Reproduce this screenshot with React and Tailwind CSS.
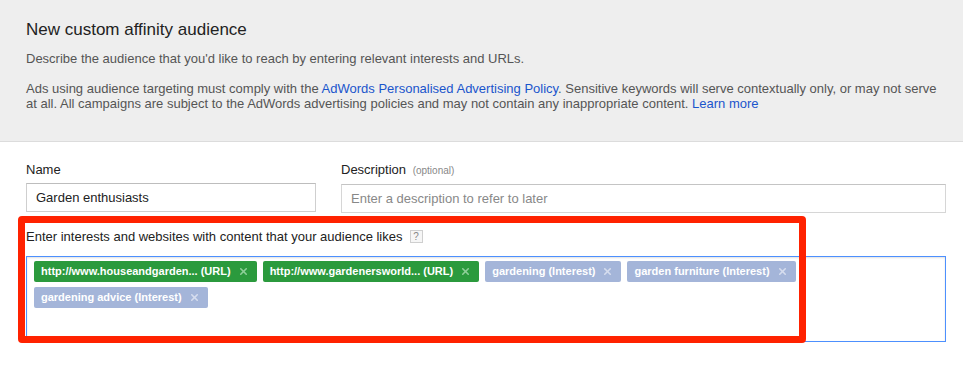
import { X } from "lucide-react";

const tags = [
  { label: "http://www.houseandgarden... (URL)", kind: "url" },
  { label: "http://www.gardenersworld... (URL)", kind: "url" },
  { label: "gardening (Interest)", kind: "interest" },
  { label: "garden furniture (Interest)", kind: "interest" },
  { label: "gardening advice (Interest)", kind: "interest" },
];

function Tag({ label, kind }) {
  const url = kind === "url";
  return (
    <span
      className={`flex h-[21px] items-center rounded-[2px] pl-[7px] pr-[8px] text-[11px] font-bold text-white ${
        url ? "bg-[#2b9a3d]" : "bg-[#a4b5d9]"
      }`}
    >
      {label}
      <X
        size={11}
        strokeWidth={3.5}
        className={`ml-[7px] ${url ? "text-[#8fcf99]" : "text-[#d6ddee]"}`}
      />
    </span>
  );
}

export default function App() {
  return (
    <div
      className="relative h-[366px] w-[963px] overflow-hidden bg-white text-[13px] leading-[15px] text-[#222]"
      style={{ fontFamily: '"Liberation Sans", Arial, sans-serif' }}
    >
      {/* header */}
      <div className="h-[142px] border-b border-[#dcdcdc] bg-[#eeeeee] px-[26px] pt-[20px]">
        <h1 className="text-[17px] leading-[20px] text-[#222]">New custom affinity audience</h1>
        <p className="mt-[11px] text-[#555]">
          Describe the audience that you'd like to reach by entering relevant interests and URLs.
        </p>
        <p className="mt-[15px] w-[920px] text-[#555]">
          Ads using audience targeting must comply with the{" "}
          <a className="text-[#1a55cc]">AdWords Personalised Advertising Policy</a>. Sensitive
          keywords will serve contextually only, or may not serve at all. All campaigns are
          subject to the AdWords advertising policies and may not contain any inappropriate
          content. <a className="text-[#1a55cc]">Learn more</a>
        </p>
      </div>

      {/* form */}
      <div className="pl-[26px] pr-[17px] pt-[20px]">
        <div className="flex gap-[25px]">
          <div className="w-[290px] shrink-0">
            <label className="block">Name</label>
            <div className="mt-[6px] flex h-[29px] items-center border border-[#cfcfcf] border-t-[#bdbdbd] px-[9px] text-[#222]">
              Garden enthusiasts
            </div>
          </div>
          <div className="w-[605px] shrink-0">
            <label className="block">
              Description <span className="ml-[3px] text-[10px] text-[#888]">(optional)</span>
            </label>
            <div className="mt-[6px] flex h-[29px] items-center border border-[#d6d6d6] border-t-[#c4c4c4] px-[9px] text-[#888]">
              Enter a description to refer to later
            </div>
          </div>
        </div>

        <div className="mt-[16px] flex items-center">
          <span>Enter interests and websites with content that your audience likes</span>
          <span className="ml-[7px] flex h-[13px] w-[13px] items-center justify-center border border-[#cfcfcf] bg-[#f6f6f6] text-[10px] leading-none text-[#888]">
            ?
          </span>
        </div>

        <div className="mt-[12px] h-[86px] w-[920px] border border-[#4d90fe] px-[7px] pt-[4px] shadow-[inset_0_1px_2px_rgba(0,0,0,0.12)]">
          <div className="flex w-[780px] flex-wrap gap-x-[6px] gap-y-[5px]">
            {tags.map((t) => (
              <Tag key={t.label} {...t} />
            ))}
          </div>
        </div>
      </div>

      {/* annotation box */}
      <div className="pointer-events-none absolute left-[18px] top-[216px] h-[127px] w-[788px] rounded-[4px] border-[7px] border-[#ff2200]" />
    </div>
  );
}
